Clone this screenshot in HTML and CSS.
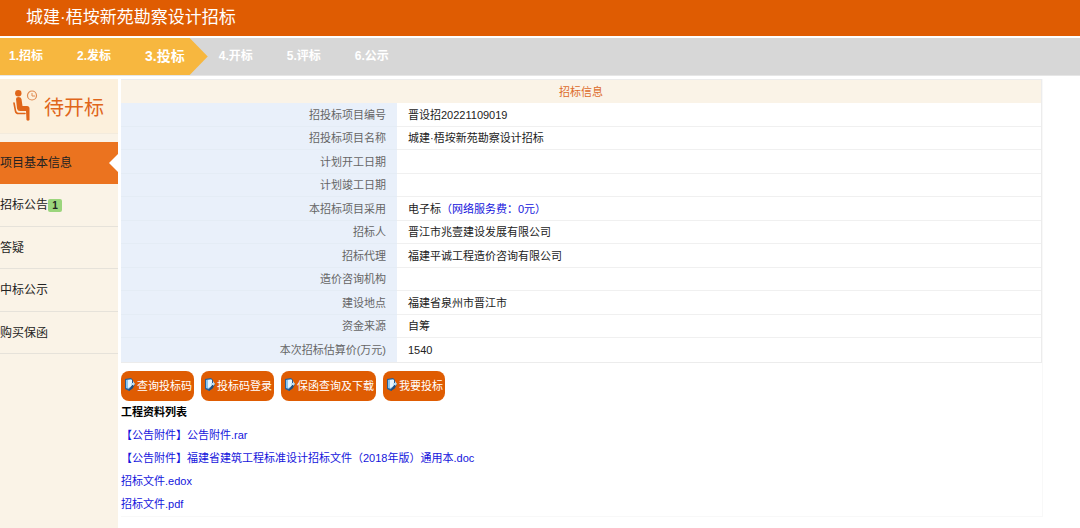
FILE: index.html
```html
<!DOCTYPE html>
<html lang="zh-CN">
<head>
  <meta charset="UTF-8" />
  <title>城建·梧垵新苑勘察设计招标</title>
  <link rel="stylesheet" href="styles.css">
</head>
<body>
  <svg class="defs" aria-hidden="true">
    <symbol id="icon-doc" viewBox="0 0 10 13">
      <path d="M0 1l6-1 2 2v8l-4 3-4-2z" fill="#2b5d92" />
      <path d="M1 2l5-1 1 1v7l-3 2-3-1z" fill="#8cc6ee" />
      <path d="M3 2l4 0v6l-4 2z" fill="#e8f5fd" />
      <path d="M4 11l4-5 2 0-2 4-4 3z" fill="#24507f" />
      <path d="M6 5h2V3l2 3-2 2V7H6z" fill="#b9def5" />
    </symbol>
  </svg>

  <header>
    <h1>城建·梧垵新苑勘察设计招标</h1>
  </header>

  <nav class="steps">
    <ol class="done">
      <li>1.招标</li>
      <li>2.发标</li>
      <li class="current">3.投标</li>
    </ol>
    <ol class="todo">
      <li>4.开标</li>
      <li>5.评标</li>
      <li>6.公示</li>
    </ol>
  </nav>

  <div class="content">
    <aside>
      <div class="status">
        <svg width="26" height="32" viewBox="0 0 26 32" fill="none" aria-hidden="true">
          <circle cx="6.300" cy="3.300" r="3.200" fill="#e0661a" />
          <path d="M4 9q0-2 2.500-2T9.500 9l1 7H15q2.500 0 2.500 2.500V30q-1.500 1.500-3 0l-.5-9H8q-2.500 0-3-2.500z" fill="#e0661a" />
          <path d="M2 13l1.500 8q.5 2.500 3 2.500H13" stroke="#e0661a" stroke-width="1.600" stroke-linecap="round" />
          <circle cx="20" cy="5.500" r="4.500" stroke="#e08a50" stroke-width="1.200" />
          <path d="M20 3v3h3" stroke="#e08a50" />
        </svg>
        <span>待开标</span>
      </div>
      <ul class="menu">
        <li class="active"><a href="#info">项目基本信息</a></li>
        <li><a href="#notice">招标公告<span class="badge">1</span></a></li>
        <li><a href="#qa">答疑</a></li>
        <li><a href="#result">中标公示</a></li>
        <li><a href="#guarantee">购买保函</a></li>
      </ul>
    </aside>

    <main id="info">
      <table>
        <colgroup>
          <col class="label-col">
          <col>
        </colgroup>
        <thead>
          <tr><th colspan="2">招标信息</th></tr>
        </thead>
        <tbody>
          <tr><th scope="row">招投标项目编号</th><td>晋设招20221109019</td></tr>
          <tr><th scope="row">招投标项目名称</th><td>城建·梧垵新苑勘察设计招标</td></tr>
          <tr><th scope="row">计划开工日期</th><td></td></tr>
          <tr><th scope="row">计划竣工日期</th><td></td></tr>
          <tr><th scope="row">本招标项目采用</th><td>电子标<span class="fee">（网络服务费：0元）</span></td></tr>
          <tr><th scope="row">招标人</th><td>晋江市兆壹建设发展有限公司</td></tr>
          <tr><th scope="row">招标代理</th><td>福建平诚工程造价咨询有限公司</td></tr>
          <tr><th scope="row">造价咨询机构</th><td></td></tr>
          <tr><th scope="row">建设地点</th><td>福建省泉州市晋江市</td></tr>
          <tr><th scope="row">资金来源</th><td>自筹</td></tr>
          <tr><th scope="row">本次招标估算价(万元)</th><td>1540</td></tr>
        </tbody>
      </table>

      <div class="actions">
        <button type="button"><svg><use href="#icon-doc" /></svg>查询投标码</button>
        <button type="button"><svg><use href="#icon-doc" /></svg>投标码登录</button>
        <button type="button"><svg><use href="#icon-doc" /></svg>保函查询及下载</button>
        <button type="button"><svg><use href="#icon-doc" /></svg>我要投标</button>
      </div>

      <h2>工程资料列表</h2>
      <ul class="files">
        <li><a href="#file1">【公告附件】公告附件.rar</a></li>
        <li><a href="#file2">【公告附件】福建省建筑工程标准设计招标文件（2018年版）通用本.doc</a></li>
        <li><a href="#file3">招标文件.edox</a></li>
        <li><a href="#file4">招标文件.pdf</a></li>
      </ul>
    </main>
  </div>
</body>
</html>
```
FILE: styles.css
```css
* {
  box-sizing: border-box;
}

body {
  margin: 0;
  min-height: 100vh;
  display: flex;
  flex-direction: column;
  font-family: "Liberation Sans", "Noto Sans CJK SC", sans-serif;
  font-size: 11px;
  color: #222;
  background: #fff;
}

ul, ol {
  list-style: none;
  margin: 0;
  padding: 0;
}

a {
  color: inherit;
  text-decoration: none;
}

.defs {
  display: none;
}

header {
  background: #df5c02;
  padding: 0 26px;
}

h1 {
  margin: 0;
  font-size: 17px;
  font-weight: normal;
  line-height: 36px;
  color: #fff;
}

/* progress bar */
.steps {
  display: flex;
  margin-top: 2px;
  background: #d7d7d7;
  border-bottom: 1px solid #e6e6e6;
  color: #fff;
  font-size: 12px;
  font-weight: bold;
  line-height: 37px;
}

.steps ol {
  display: flex;
  gap: 34px;
}

.steps .done {
  padding: 0 23px 0 9px;
  background: #f7b73f;
  clip-path: polygon(0 0, calc(100% - 18px) 0, 100% 50%, calc(100% - 18px) 100%, 0 100%);
}

.steps .todo {
  padding-left: 11px;
}

.steps .current {
  font-size: 14px;
}

.content {
  flex: 1;
  display: flex;
  gap: 3px;
  padding-top: 3px;
}

/* sidebar */
aside {
  flex: 0 0 118px;
  background: #faf3e7;
}

.status {
  display: flex;
  align-items: center;
  gap: 6px;
  height: 55px;
  padding-left: 12px;
  margin-bottom: 8px;
  background: #fcf0dc;
  border-bottom: 1px solid #f3ebdd;
  font-size: 20px;
  color: #e0661a;
}

.menu li {
  position: relative;
  height: 42px;
  border-bottom: 1px solid #e6e2da;
  font-size: 12px;
  line-height: 42px;
}

.menu li:nth-child(even) {
  height: 43px;
}

.menu a {
  display: flex;
  align-items: center;
}

.menu .active {
  background: #eb731f;
  border-bottom-color: #eb731f;
}

.menu .active::after {
  content: "";
  position: absolute;
  right: 0;
  top: 12px;
  border: 9px solid transparent;
  border-left-width: 0;
  border-right-color: #fff;
}

.badge {
  width: 14px;
  background: #9bd57c;
  border-radius: 2px;
  font-size: 10px;
  font-weight: bold;
  line-height: 13px;
  text-align: center;
}

/* main panel */
main {
  flex: 1;
  align-self: flex-start;
  margin-right: 37px;
  border: solid #f8f8f8;
  border-width: 0 1px 1px 0;
}

table {
  width: 100%;
  table-layout: fixed;
  border-collapse: separate;
  border-spacing: 0;
  border: 1px solid #ececec;
  border-left: 0;
  line-height: 16px;
}

.label-col {
  width: 30%;
}

table th,
table td {
  padding: 0 11px;
  font-weight: normal;
  border-bottom: 1px solid #f0f0f0;
}

tr {
  height: 23px;
}

tbody tr:nth-child(odd) {
  height: 24px;
}

thead th {
  background: #faf3e7;
  border-bottom: 0;
  color: #dd6b2a;
}

tbody th {
  background: #e9f0fa;
  border-bottom-color: #e4ecf5;
  color: #666;
  text-align: right;
}

tbody tr:last-child > * {
  border-bottom: 0;
}

.fee {
  color: #1414dc;
}

.actions {
  display: flex;
  flex-wrap: wrap;
  gap: 7px;
  margin-top: 8px;
}

button {
  display: flex;
  align-items: center;
  gap: 2px;
  height: 30px;
  padding: 0 2px 0 4px;
  background: #df5c02;
  border: 0;
  border-radius: 8px;
  font-family: inherit;
  font-size: 11px;
  line-height: 16px;
  color: #fff;
  cursor: pointer;
}

button svg {
  width: 10px;
  height: 13px;
  margin-bottom: 4px;
}

h2 {
  margin: 0;
  font-size: 11px;
  line-height: 23px;
  color: #000;
}

.files {
  line-height: 23px;
  color: #1414dc;
}
```
